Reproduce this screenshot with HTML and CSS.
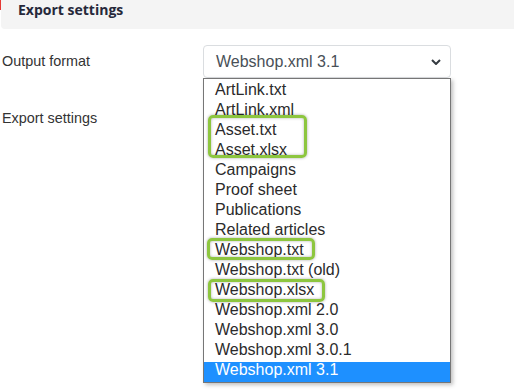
FILE: index.html
```html
<!DOCTYPE html>
<html lang="en">
    <head>
        <title>Export settings</title>
        <meta charset="UTF-8">
        <link rel="stylesheet" href="styles.css">
    </head>
    <body>
        <div class="section-head">Export settings</div>
        <div class="form">
            <div class="form-row">
                <label class="form-label">Output format</label>
                <div class="select-wrap">
                    <div class="select">
                        <span>Webshop.xml 3.1</span>
                        <svg class="chevron" width="10" height="6" viewBox="0 0 10 6">
                            <path d="M1 1 L5 5 L9 1" fill="none" stroke="#343a40" stroke-width="2"/>
                        </svg>
                    </div>
                    <ul class="dropdown">
                        <li>ArtLink.txt</li>
                        <li>ArtLink.xml</li>
                        <li>Asset.txt</li>
                        <li>Asset.xlsx</li>
                        <li>Campaigns</li>
                        <li>Proof sheet</li>
                        <li>Publications</li>
                        <li>Related articles</li>
                        <li>Webshop.txt</li>
                        <li>Webshop.txt (old)</li>
                        <li>Webshop.xlsx</li>
                        <li>Webshop.xml 2.0</li>
                        <li>Webshop.xml 3.0</li>
                        <li>Webshop.xml 3.0.1</li>
                        <li class="selected">Webshop.xml 3.1</li>
                    </ul>
                    <span class="mark mark-asset"></span>
                    <span class="mark mark-txt"></span>
                    <span class="mark mark-xlsx"></span>
                </div>
            </div>
            <div class="form-row">
                <label class="form-label">Export settings</label>
            </div>
        </div>
    </body>
</html>
```

FILE: styles.css
```css
html, body {
    min-height: 390px;
}

body {
    margin: 0;
    background-color: #FFFFFF;
    font-family: 'Liberation Sans', Arial, sans-serif;
    color: #333333;
}

.section-head {
    position: relative;
    height: 29px;
    margin-left: 1px;
    padding-left: 17px;
    background-color: #F4F4F4;
    border-bottom-left-radius: 4px;
    font-family: 'Open Sans', sans-serif;
    font-weight: 700;
    font-size: 14px;
    line-height: 20px;
    color: #26283A;
}
.section-head:before {
    content: '';
    position: absolute;
    left: -1px;
    top: 0;
    width: 1px;
    height: 10px;
    background-color: #E53935;
}

.form {
    padding-top: 16px;
}

.form-row {
    display: flex;
    align-items: flex-start;
    margin-bottom: 24px;
}

.form-label {
    width: 201px;
    padding-left: 2px;
    font-size: 14.4px;
    line-height: 33px;
    color: #333333;
}

.select-wrap {
    position: relative;
    width: 248px;
}

.select {
    display: flex;
    align-items: center;
    justify-content: space-between;
    box-sizing: border-box;
    height: 33px;
    padding: 0 9px 0 12px;
    border: 1px solid #DADDE0;
    border-radius: 4px;
    font-size: 16px;
    color: #495057;
}

.chevron {
    display: block;
}

.dropdown {
    position: absolute;
    top: 33px;
    left: 0;
    z-index: 2;
    box-sizing: border-box;
    width: 248px;
    height: 305px;
    margin: 0;
    padding: 3px 0 0 0;
    list-style: none;
    overflow: hidden;
    background-color: #FFFFFF;
    border: 1px solid #767676;
    box-shadow: 2px 2px 4px rgba(0, 0, 0, 0.25);
}
.dropdown li {
    height: 16px;
    padding: 0 0 4px 11px;
    font-size: 16px;
    line-height: 16px;
    color: #2B2B2B;
    white-space: nowrap;
}
.dropdown li.selected {
    background-color: #1E90FF;
    color: #FFFFFF;
}

.mark {
    position: absolute;
    z-index: 3;
    box-sizing: border-box;
    border: 3px solid #8DC63F;
    border-radius: 5px;
    box-shadow: 0 0 3px rgba(0, 0, 0, 0.35), inset 0 0 3px rgba(0, 0, 0, 0.3);
}
.mark-asset {
    left: 5px;
    top: 70px;
    width: 99px;
    height: 43px;
}
.mark-txt {
    left: 4px;
    top: 193px;
    width: 108px;
    height: 22px;
}
.mark-xlsx {
    left: 5px;
    top: 234px;
    width: 117px;
    height: 23px;
}
```
